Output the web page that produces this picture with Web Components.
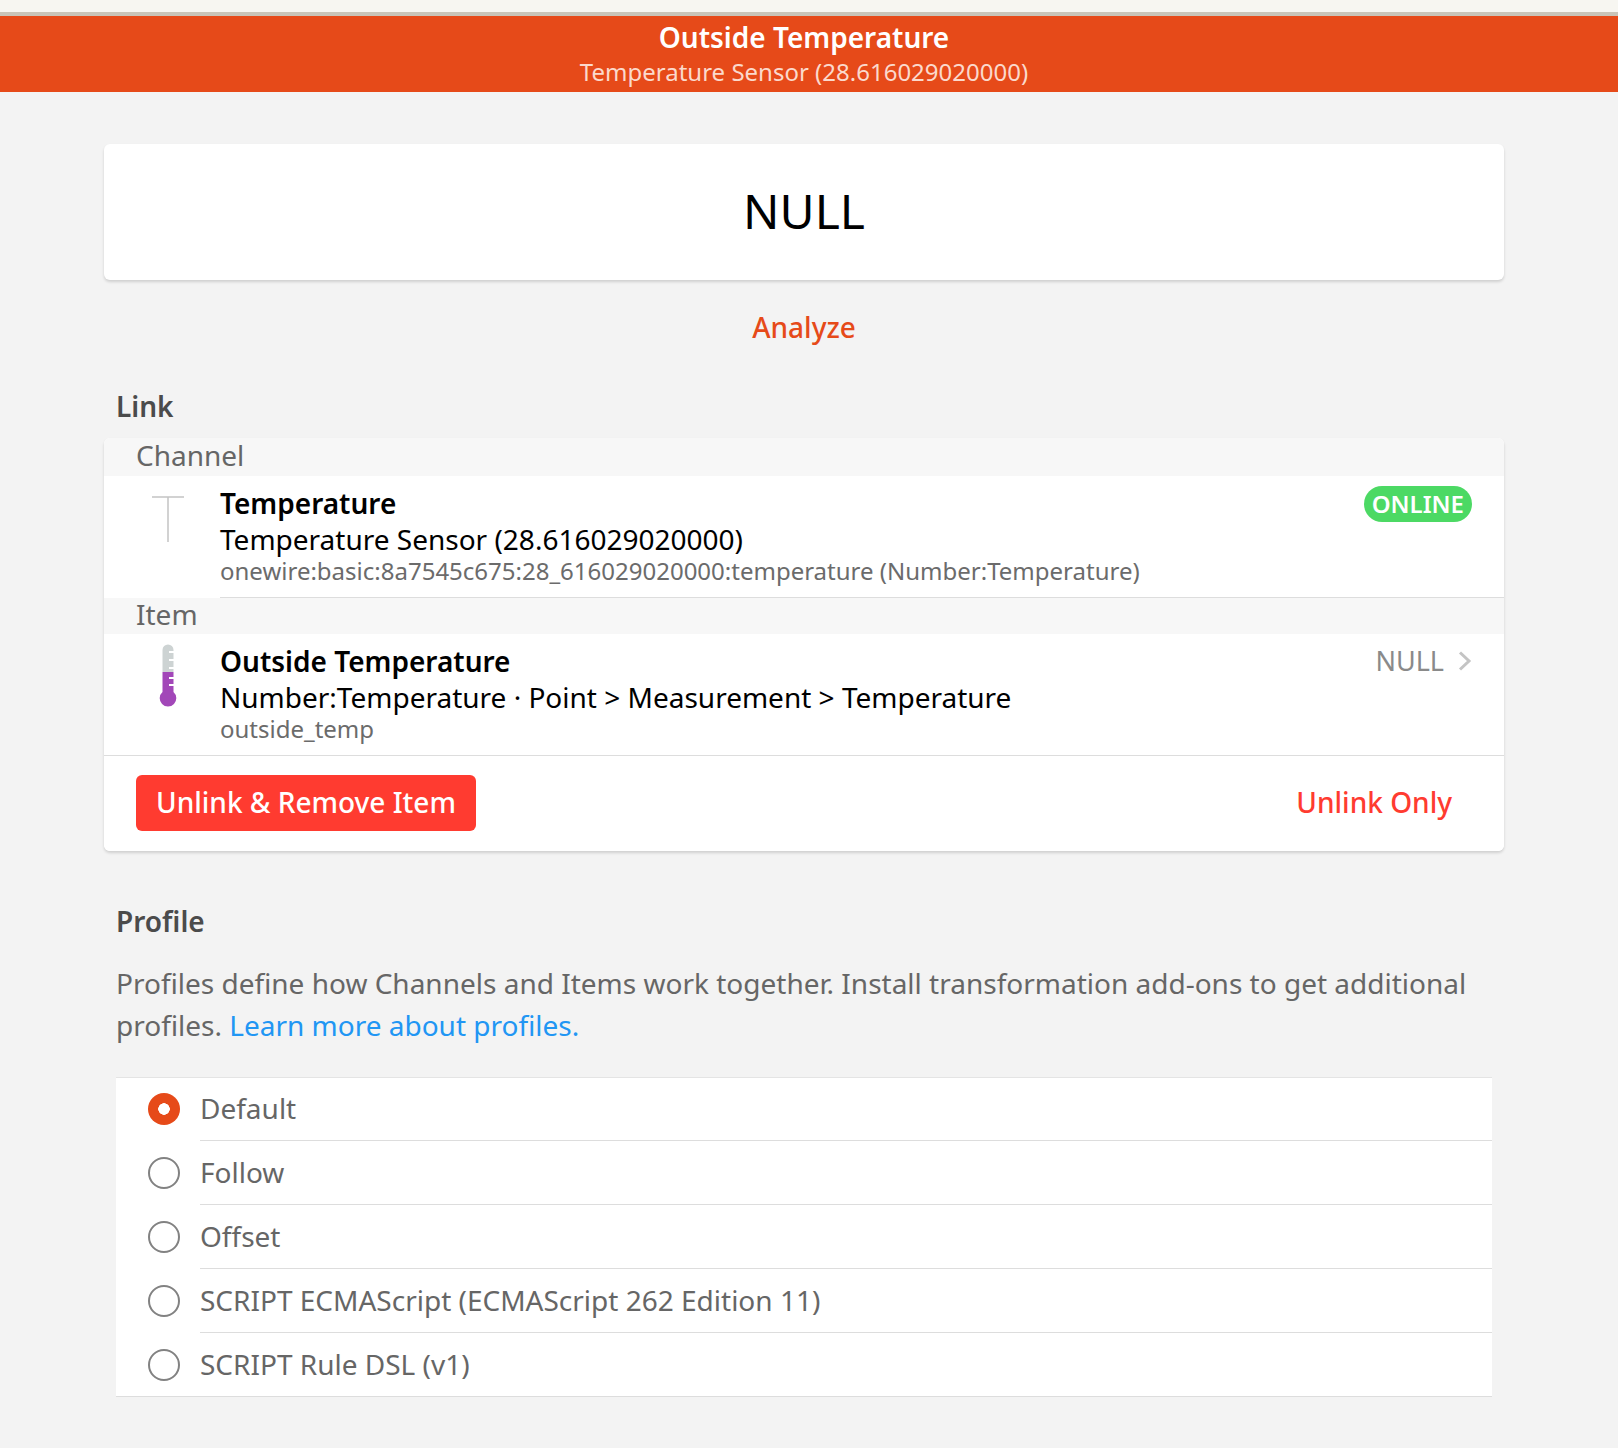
<!DOCTYPE html>
<html><head><meta charset="utf-8"><style>
html,body{margin:0;padding:0;background:#f3f3f3;font-family:"Noto Sans",sans-serif;}
</style></head><body>
<app-page></app-page>
<script>
const def=(n,html)=>customElements.define(n,class extends HTMLElement{constructor(){super();this.attachShadow({mode:'open'}).innerHTML=html;}});
def('app-title',`<style>:host{display:block;border-top:12px solid #f7f6f1;background:#e64a19;color:#fff;text-align:center;box-sizing:border-box;height:92px;padding:0 10px 0 0}
.top{height:4px;background:#c9c4b8;margin-right:-10px}
.a{font-size:28px;font-weight:600;line-height:38px;margin-top:2px}.b{font-size:24px;line-height:32px;color:#fbd9cc}</style><div class="top"></div><div class="a">Outside Temperature</div><div class="b">Temperature Sensor (28.616029020000)</div>`);
def('app-card',`<style>:host{display:block;background:#fff;border-radius:6px;box-shadow:0 2px 3px rgba(0,0,0,.15);margin:0 114px 0 104px}</style><slot></slot>`);
def('sec-title',`<style>:host{display:block;margin:0 116px;font-size:28px;font-weight:600;color:#4b4b4b;line-height:38px}</style><slot></slot>`);
def('div-row',`<style>:host{display:block;background:#f7f7f7;color:#666;font-size:28px;line-height:34px;height:36px;padding-left:32px}</style><slot></slot>`);
def('link-row',`<style>:host{display:flex;height:122px;box-sizing:border-box;background:#fff}
.ic{width:116px;flex:none;display:flex;justify-content:center;align-items:flex-start;padding:10px 0 0 12px;box-sizing:border-box}
.b{flex:1;display:flex;border-bottom:1px solid #ddd}
:host([full]){border-bottom:1px solid #ddd}:host([full]) .b{border-bottom:none}
.t{flex:1;padding-top:9px}.h{font-size:28px;font-weight:600;line-height:36px;color:#000}.s{font-size:28px;line-height:36px;color:#000}.f{font-size:24px;line-height:28px;color:#6b6b6b}
.r{padding:10px 32px 0 0}</style><div class="ic"><slot name="icon"></slot></div><div class="b"><div class="t"><div class="h"><slot name="h"></slot></div><div class="s"><slot name="s"></slot></div><div class="f"><slot name="f"></slot></div></div><div class="r"><slot name="r"></slot></div></div>`);
def('radio-row',`<style>:host{display:flex;align-items:center;height:64px;background:#fff;color:#666;font-size:28px;padding-left:32px;box-sizing:border-box}
:host([first]){box-shadow:inset 0 1px 0 #e4e4e4}
:host([last]){border-bottom:1px solid #ddd}:host([last]) .t{border-bottom:none}
.c{width:32px;height:32px;border-radius:50%;border:2px solid #828282;box-sizing:border-box;margin-right:20px;flex:none}
:host([on]) .c{border:none;background:radial-gradient(circle,#fff 0 5.5px,#e64a19 6px)}
.t{flex:1;height:100%;display:flex;align-items:center;padding-bottom:2px;border-bottom:1px solid #ddd;box-sizing:border-box}</style><span class="c"></span><span class="t"><slot></slot></span>`);
def('app-page',`<style>:host{display:block;height:1448px;overflow:hidden}
.null{height:136px;box-sizing:border-box;padding-bottom:4px;display:flex;align-items:center;justify-content:center;font-size:48px;color:#000}
.an{text-align:center;color:#e64a19;font-size:28px;font-weight:500;line-height:38px;margin:28px 10px 41px 0}
.act{display:flex;justify-content:space-between;align-items:flex-start;height:95px;padding:19px 52px 0 32px;box-sizing:border-box;background:#fff;border-radius:0 0 6px 6px}
.b1{background:#ff3b30;color:#fff;border-radius:6px;font-size:28px;font-weight:500;height:56px;box-sizing:border-box;padding:0 20px 2px;display:flex;align-items:center}.b2{color:#ff3b30;font-size:28px;font-weight:500;line-height:54px}
.p{margin:22px 126px 0 116px;font-size:28px;line-height:42px;color:#666}a{color:#2196f3}
.l{margin:31px 126px 0 116px}
.badge{background:#4cd964;color:#fff;border-radius:18px;font-size:24px;font-weight:600;padding:0 8px;height:36px;line-height:35px;display:block}
.v{color:#8a8a8a;font-size:27px;display:flex;align-items:center;gap:14px;line-height:34px}
</style>
<app-title></app-title>
<app-card style="margin-top:52px"><div class="null">NULL</div></app-card>
<div class="an">Analyze</div>
<sec-title>Link</sec-title>
<app-card style="margin-top:13px">
<div-row style="height:38px;border-radius:6px 6px 0 0">Channel</div-row>
<link-row><svg slot="icon" width="34" height="60" viewBox="0 0 34 60"><path d="M1 11H33M17 11V56" stroke="#c4c4c4" stroke-width="1.5" fill="none"/></svg><span slot="h">Temperature</span><span slot="s">Temperature Sensor (28.616029020000)</span><span slot="f">onewire:basic:8a7545c675:28_616029020000:temperature (Number:Temperature)</span><span slot="r" class="badge">ONLINE</span></link-row>
<div-row style="line-height:32px">Item</div-row>
<link-row full><svg slot="icon" width="18" height="64" viewBox="0 0 18 64"><path d="M3.5 6a5.5 5.5 0 0 1 11 0V28H3.5z" fill="#cdd3d3"/><path d="M3.5 28h11v20a8.3 8.3 0 1 1-11 0z" fill="#a247b8"/><path d="M10 8h5M10 16h5M10 24h5M10 34h5M10 41h5" stroke="#fff" stroke-width="2" fill="none"/></svg><span slot="h">Outside Temperature</span><span slot="s">Number:Temperature · Point &gt; Measurement &gt; Temperature</span><span slot="f">outside_temp</span><span slot="r" class="v">NULL <svg width="14" height="22" viewBox="0 0 14 22"><path d="M2 2.5l9 8.5-9 8.5" stroke="#c4c4c4" stroke-width="3" fill="none"/></svg></span></link-row>
<div class="act"><div class="b1">Unlink &amp; Remove Item</div><div class="b2">Unlink Only</div></div>
</app-card>
<sec-title style="margin-top:51px">Profile</sec-title>
<div class="p">Profiles define how Channels and Items work together. Install transformation add-ons to get additional profiles. <a>Learn more about profiles.</a></div>
<div class="l"><radio-row on first>Default</radio-row><radio-row>Follow</radio-row><radio-row>Offset</radio-row><radio-row>SCRIPT ECMAScript (ECMAScript 262 Edition 11)</radio-row><radio-row last>SCRIPT Rule DSL (v1)</radio-row></div>`);
</script></body></html>
